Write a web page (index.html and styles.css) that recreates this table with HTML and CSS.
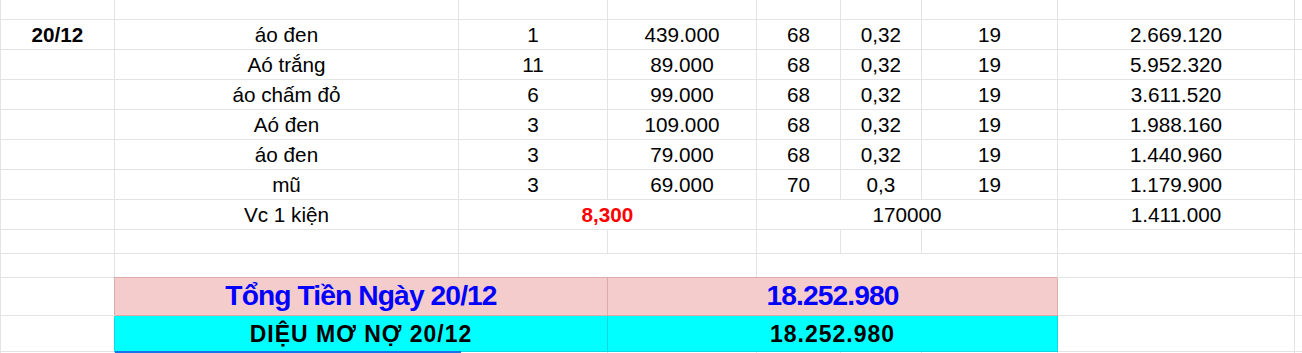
FILE: index.html
```html
<!DOCTYPE html>
<html lang="vi">
<head>
<meta charset="utf-8">
<title>Sheet</title>
<link rel="stylesheet" href="styles.css">
</head>
<body>
<div class="sheet">
  <div class="c"></div><div class="c"></div><div class="c"></div><div class="c"></div><div class="c"></div><div class="c"></div><div class="c"></div><div class="c"></div><div class="c"></div>

  <div class="c b">20/12</div><div class="c">áo đen</div><div class="c">1</div><div class="c">439.000</div><div class="c">68</div><div class="c">0,32</div><div class="c">19</div><div class="c">2.669.120</div><div class="c"></div>

  <div class="c"></div><div class="c">Aó trắng</div><div class="c">11</div><div class="c">89.000</div><div class="c">68</div><div class="c">0,32</div><div class="c">19</div><div class="c">5.952.320</div><div class="c"></div>

  <div class="c"></div><div class="c">áo chấm đỏ</div><div class="c">6</div><div class="c">99.000</div><div class="c">68</div><div class="c">0,32</div><div class="c">19</div><div class="c">3.611.520</div><div class="c"></div>

  <div class="c"></div><div class="c">Aó đen</div><div class="c">3</div><div class="c">109.000</div><div class="c">68</div><div class="c">0,32</div><div class="c">19</div><div class="c">1.988.160</div><div class="c"></div>

  <div class="c"></div><div class="c">áo đen</div><div class="c">3</div><div class="c">79.000</div><div class="c">68</div><div class="c">0,32</div><div class="c">19</div><div class="c">1.440.960</div><div class="c"></div>

  <div class="c"></div><div class="c">mũ</div><div class="c">3</div><div class="c">69.000</div><div class="c">70</div><div class="c">0,3</div><div class="c">19</div><div class="c">1.179.900</div><div class="c"></div>

  <div class="c"></div><div class="c">Vc 1 kiện</div><div class="c b red span2">8,300</div><div class="c span3">170000</div><div class="c">1.411.000</div><div class="c"></div>

  <div class="c"></div><div class="c"></div><div class="c"></div><div class="c"></div><div class="c"></div><div class="c"></div><div class="c"></div><div class="c"></div><div class="c"></div>

  <div class="c"></div><div class="c"></div><div class="c span2"></div><div class="c span3"></div><div class="c"></div><div class="c"></div>

  <div class="c"></div><div class="c pink span2">Tổng Tiền Ngày 20/12</div><div class="c pink span4">18.252.980</div><div class="c"></div><div class="c"></div>

  <div class="c"></div><div class="c cyan span2">DIỆU MƠ NỢ 20/12</div><div class="c cyan span4">18.252.980</div><div class="c"></div><div class="c"></div>

  <div class="c"></div><div class="c"></div><div class="c"></div><div class="c"></div><div class="c"></div><div class="c"></div><div class="c"></div><div class="c"></div><div class="c"></div>

  <div class="selection"></div>
</div>
</body>
</html>
```

FILE: styles.css
```css
* { box-sizing: border-box; }

html, body {
  margin: 0;
  padding: 0;
  background: #ffffff;
  overflow: hidden;
}

.sheet {
  position: relative;
  width: 1302px;
  height: 353px;
  overflow: hidden;
  display: grid;
  grid-template-columns: 114px 344px 149px 149px 84px 81px 136px 237px 8px;
  grid-template-rows: 20px repeat(7, 30px) 24px 24px 38px 36px 20px;
  border-left: 1px solid #e2e3e3;
  font-family: "Liberation Sans", Arial, sans-serif;
  font-size: 20.7px;
  color: #000000;
}

.c {
  display: flex;
  align-items: flex-end;
  justify-content: center;
  border-right: 1px solid #e2e3e3;
  border-bottom: 1px solid #e2e3e3;
  line-height: 1;
  padding-bottom: 3px;
  white-space: nowrap;
  overflow: visible;
}

.b { font-weight: bold; }
.red { color: #ff0000; }

.span2 { grid-column: span 2; }
.span3 { grid-column: span 3; }
.span4 { grid-column: span 4; }

.pink {
  background: #f4cccc;
  color: #0000ff;
  font-weight: bold;
  font-size: 28.2px;
  letter-spacing: -0.9px;
  padding-bottom: 5.5px;
  border-right-color: #dcaaaa;
  border-bottom-color: #dcaaaa;
  box-shadow: -1px -1px 0 #dcaaaa;
}

.cyan {
  background: #00ffff;
  color: #000000;
  font-weight: bold;
  font-size: 23px;
  letter-spacing: 1px;
  padding-bottom: 5px;
  border-right-color: #10d8e0;
  border-bottom-color: #10d8e0;
  box-shadow: -1px 0 0 #10d8e0;
}

.selection {
  position: absolute;
  left: 114px;
  top: 351px;
  width: 346px;
  height: 3px;
  background: #1a73e8;
}
```
